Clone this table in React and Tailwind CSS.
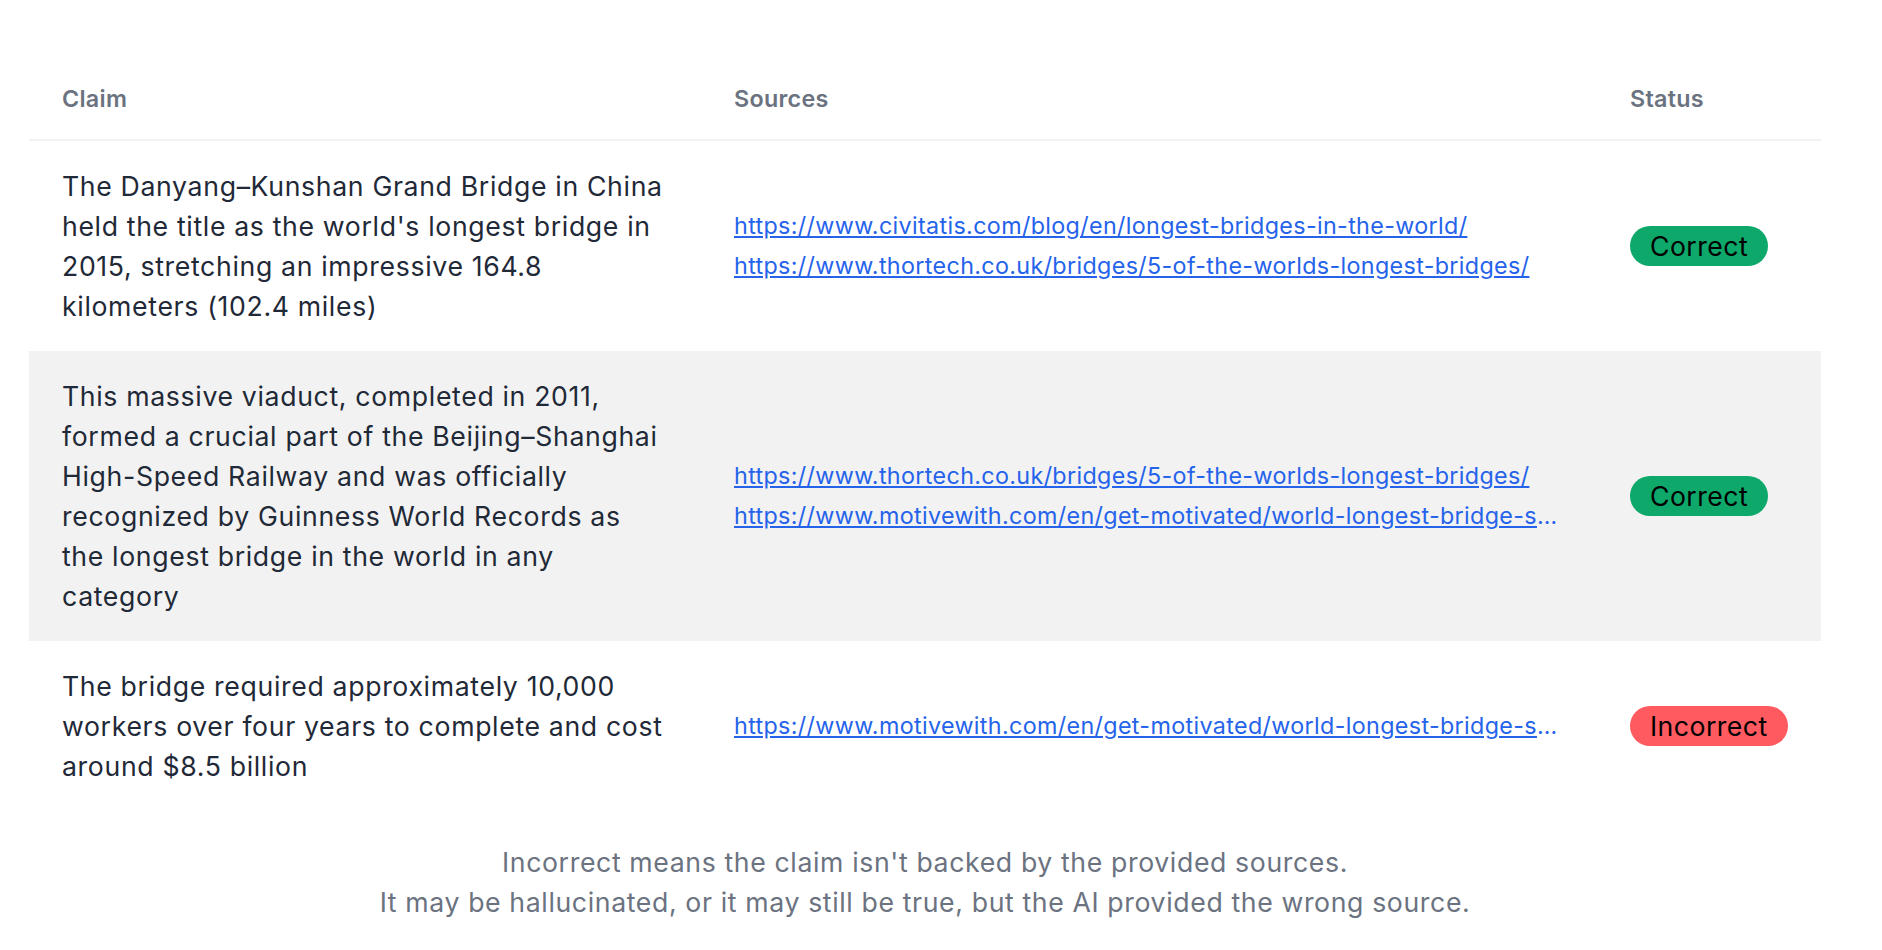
import React from 'react';

// --------------------------------------------------------
// Data
// --------------------------------------------------------

const rows = [
  {
    claim:
      "The Danyang–Kunshan Grand Bridge in China held the title as the world's longest bridge in 2015, stretching an impressive 164.8 kilometers (102.4 miles)",
    sources: [
      'https://www.civitatis.com/blog/en/longest-bridges-in-the-world/',
      'https://www.thortech.co.uk/bridges/5-of-the-worlds-longest-bridges/',
    ],
    correct: true,
  },
  {
    claim:
      'This massive viaduct, completed in 2011, formed a crucial part of the Beijing–Shanghai High-Speed Railway and was officially recognized by Guinness World Records as the longest bridge in the world in any category',
    sources: [
      'https://www.thortech.co.uk/bridges/5-of-the-worlds-longest-bridges/',
      'https://www.motivewith.com/en/get-motivated/world-longest-bridge-saved-record-breaking-achievements/',
    ],
    correct: true,
  },
  {
    claim:
      'The bridge required approximately 10,000 workers over four years to complete and cost around $8.5 billion',
    sources: [
      'https://www.motivewith.com/en/get-motivated/world-longest-bridge-saved-record-breaking-achievements/',
    ],
    correct: false,
  },
];

// --------------------------------------------------------
// Page component
// --------------------------------------------------------

const App = () => {
  return (
    <div
      className="min-h-screen bg-white pt-[58px] pl-[29px] text-[#1f2937]"
      style={{ fontFamily: 'Inter, "Noto Sans", sans-serif' }}
    >
      <div className="w-[1792px]">
        <table className="w-full table-fixed border-collapse">
          <colgroup>
            <col className="w-[672px]" />
            <col className="w-[897px]" />
            <col className="w-[223px]" />
          </colgroup>
          <thead>
            <tr className="border-b-2 border-[#f3f3f3]">
              <th className="px-[33px] py-[24px] text-left text-[23.3px] leading-[33px] font-semibold tracking-[0.3px] text-[#6b7280]">
                Claim
              </th>
              <th className="px-[33px] py-[24px] text-left text-[23.3px] leading-[33px] font-semibold tracking-[0.3px] text-[#6b7280]">
                Sources
              </th>
              <th className="px-[32px] py-[24px] text-left text-[23.3px] leading-[33px] font-semibold tracking-[0.3px] text-[#6b7280]">
                Status
              </th>
            </tr>
          </thead>
          <tbody>
            {rows.map((row, i) => (
              <tr key={i} className={i % 2 === 1 ? 'bg-[#f2f2f2]' : 'bg-white'}>
                <td className="px-[33px] py-[25px] align-middle text-[26.67px] leading-[40px] tracking-[0.65px]">
                  {row.claim}
                </td>
                <td className="px-[33px] py-[25px] align-middle">
                  {row.sources.map((src) => (
                    <a
                      key={src}
                      href={src}
                      className="block truncate text-[23.3px] leading-[40px] tracking-[0.35px] text-[#2563eb] underline"
                    >
                      {src}
                    </a>
                  ))}
                </td>
                <td className="px-[32px] py-[25px] align-middle">
                  <span
                    className={
                      row.correct
                        ? 'inline-block rounded-full bg-[#0ea86b] px-[20px] text-[26.67px] leading-[40px] tracking-[0.45px] text-black'
                        : 'inline-block rounded-full bg-[#ff5a60] px-[20px] text-[26.67px] leading-[40px] tracking-[0.45px] text-black'
                    }
                  >
                    {row.correct ? 'Correct' : 'Incorrect'}
                  </span>
                </td>
              </tr>
            ))}
          </tbody>
        </table>

        {/* Footnote */}
        <p className="mt-[31px] text-center text-[26.67px] leading-[40px] tracking-[0.62px] text-[#6b7280]">
          Incorrect means the claim isn't backed by the provided sources.
          <br />
          It may be hallucinated, or it may still be true, but the AI provided the wrong source.
        </p>
      </div>
    </div>
  );
};

export default App;
